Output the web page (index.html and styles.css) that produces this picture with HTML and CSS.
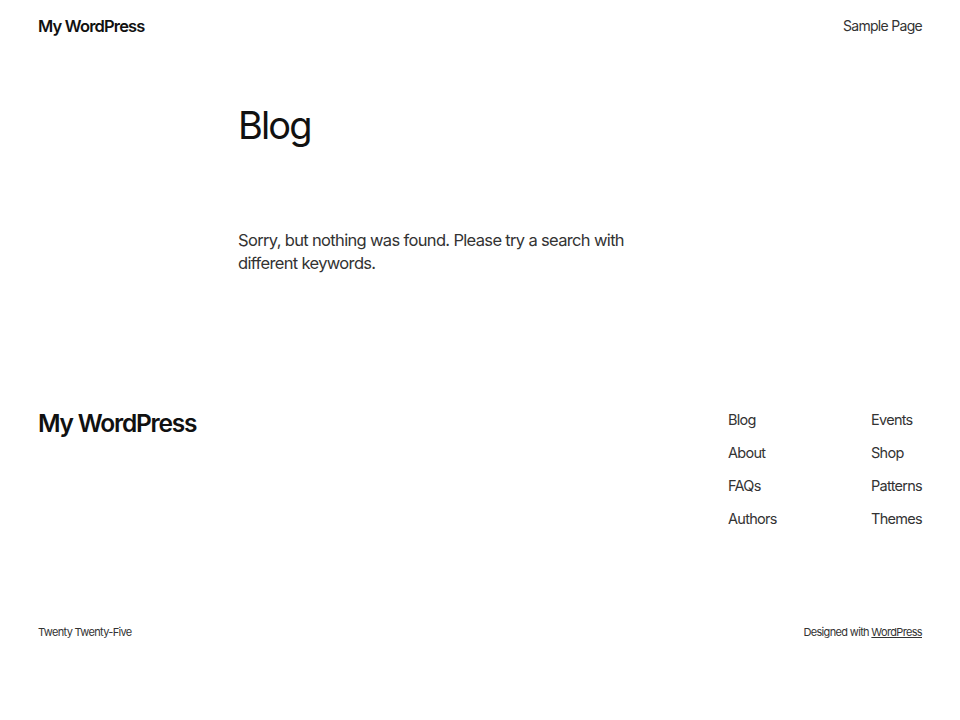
FILE: index.html
```html
<!DOCTYPE html>
<html lang="en">
<head>
<meta charset="utf-8">
<title>Blog – My WordPress</title>
<link rel="stylesheet" href="styles.css">
</head>
<body>
<header class="site-header">
  <a class="site-title" href="#">My WordPress</a>
  <nav class="header-nav"><a href="#">Sample Page</a></nav>
</header>
<main class="main">
  <h1 class="page-title">Blog</h1>
  <p class="empty">Sorry, but nothing was found. Please try a search with different keywords.</p>
</main>
<footer class="site-footer">
  <div class="footer-top">
    <a class="footer-title" href="#">My WordPress</a>
    <div class="footer-navs">
      <ul class="footer-nav">
        <li><a href="#">Blog</a></li>
        <li><a href="#">About</a></li>
        <li><a href="#">FAQs</a></li>
        <li><a href="#">Authors</a></li>
      </ul>
      <ul class="footer-nav">
        <li><a href="#">Events</a></li>
        <li><a href="#">Shop</a></li>
        <li><a href="#">Patterns</a></li>
        <li><a href="#">Themes</a></li>
      </ul>
    </div>
  </div>
  <div class="footer-bottom">
    <span>Twenty Twenty-Five</span>
    <span>Designed with <a class="ul" href="#">WordPress</a></span>
  </div>
</footer>
</body>
</html>
```
FILE: styles.css
```css
* { box-sizing: border-box; }
body {
  margin: 0;
  font-family: Inter, "Noto Sans", sans-serif;
  color: #111;
  background: #fff;
}
a { color: inherit; text-decoration: none; }
.site-header {
  display: flex;
  justify-content: space-between;
  align-items: flex-start;
  padding: 15px 38px 0;
  height: 52px;
}
.site-title {
  font-size: 16.5px;
  font-weight: 600;
  line-height: 22px;
  letter-spacing: -0.05em;
}
.header-nav {
  font-size: 14px;
  line-height: 22px;
  color: #333;
  letter-spacing: -0.05em;
}
.main {
  padding: 49px 0 0 238px;
  height: 360px;
}
.page-title {
  margin: 0;
  font-size: 38px;
  font-weight: 400;
  line-height: 48px;
  letter-spacing: -0.05em;
}
.empty {
  margin: 80px 0 0;
  width: 420px;
  font-size: 16.5px;
  line-height: 22.5px;
  color: #333;
  letter-spacing: -0.04em;
}
.site-footer { padding: 0 38px; }
.footer-top {
  display: flex;
  justify-content: space-between;
  align-items: flex-start;
  height: 212px;
}
.footer-title {
  font-size: 24.5px;
  font-weight: 600;
  line-height: 32px;
  margin-top: -5px;
  letter-spacing: -0.05em;
}
.footer-navs {
  display: flex;
  margin-top: -2px;
}
.footer-nav {
  list-style: none;
  margin: 0;
  padding: 0;
  width: 143px;
  font-size: 14.5px;
  line-height: 20px;
  color: #333;
  letter-spacing: -0.05em;
}
.footer-nav:last-child { width: auto; }
.footer-nav li { margin-bottom: 13px; }
.footer-bottom {
  display: flex;
  justify-content: space-between;
  font-size: 11px;
  line-height: 16px;
  color: #333;
  letter-spacing: -0.06em;
}
.ul { text-decoration: underline; }
```
